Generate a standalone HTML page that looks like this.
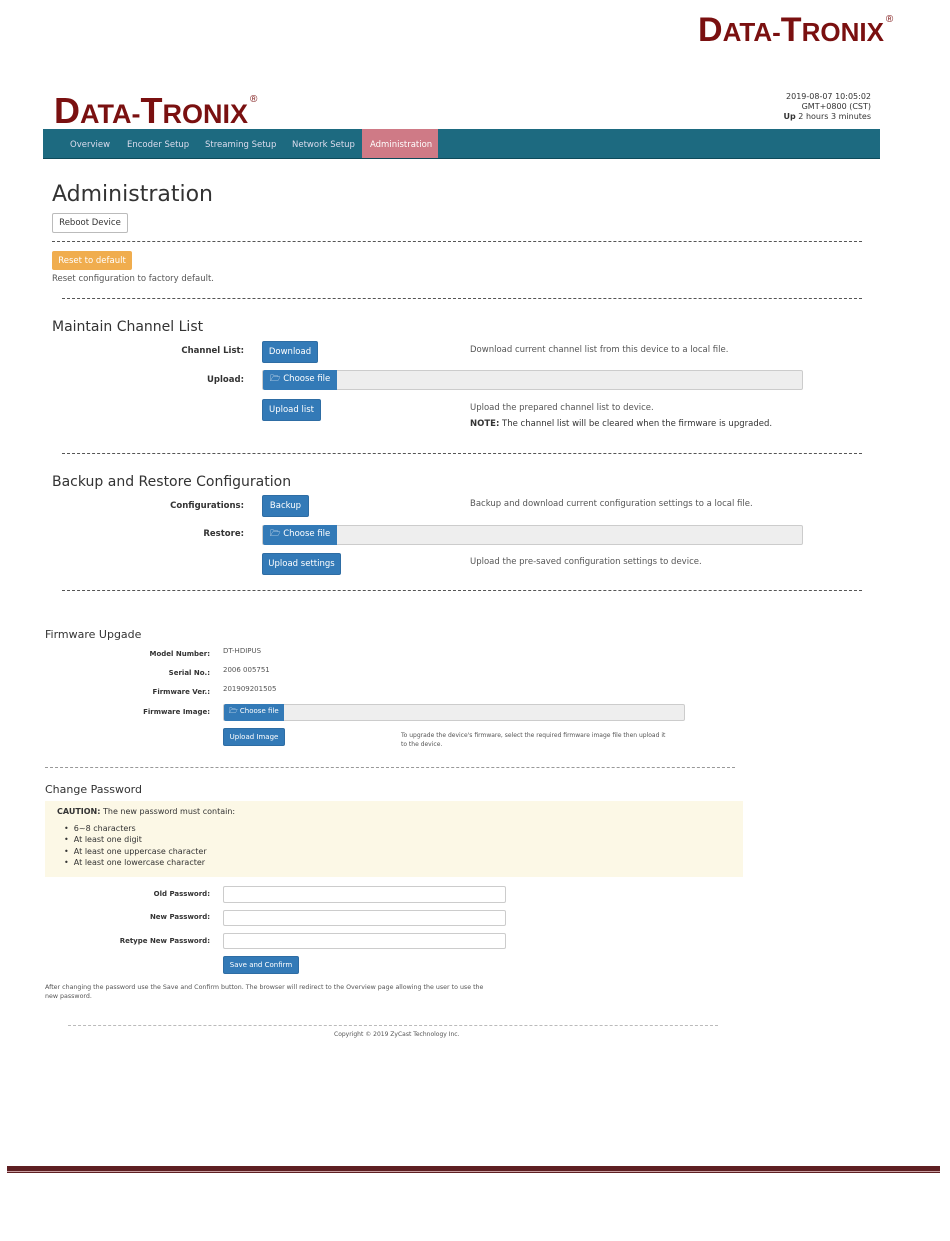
<!DOCTYPE html>
<html><head><meta charset="utf-8"><style>
body{margin:0;width:950px;height:1241px;position:relative;background:#fff;font-family:"DejaVu Sans","Liberation Sans",sans-serif;color:#333;overflow:hidden}
.a{position:absolute;white-space:nowrap}
.logo{font-family:"Liberation Sans",sans-serif;font-weight:bold;color:#7a1010;line-height:1}
.logo sup{font-size:10px;vertical-align:top;line-height:1;position:relative;top:2px;color:#7a1010;font-weight:normal;margin-left:2px}
.btn{position:absolute;background:#337ab7;color:#fff;border:1px solid #2e6da4;border-radius:2px;font-size:8.5px;display:flex;align-items:center;justify-content:center}
.file{position:absolute;background:#eee;border:1px solid #ccc;border-radius:2px}
.file span{position:absolute;left:0;top:-1px;bottom:-1px;background:#337ab7;color:#fff;font-size:8.5px;display:flex;align-items:center;padding:0 7px;border-radius:2px 0 0 2px}
.dash{position:absolute;border-top:1px dashed #555;height:0}
.lbl{position:absolute;font-weight:bold;font-size:8.5px;text-align:right;color:#333}
.t{position:absolute;font-size:8.5px;color:#555;white-space:nowrap}
.in{position:absolute;border:1px solid #ccc;border-radius:2px;background:#fff}
</style></head><body>
<div class="a logo" style="left:698px;top:13px;font-size:34px">D<span style="font-size:26px">ATA-</span>T<span style="font-size:26px">RONIX</span><sup>®</sup></div>
<div class="a logo" style="left:54px;top:93px;font-size:36px">D<span style="font-size:27px">ATA-</span>T<span style="font-size:27px">RONIX</span><sup>®</sup></div>
<div class="a" style="right:79px;top:92px;font-size:8px;text-align:right;line-height:10px;color:#333">2019-08-07 10:05:02<br>GMT+0800 (CST)<br><b>Up</b> 2 hours 3 minutes</div>
<div class="a" style="left:43px;top:129px;width:837px;height:29px;background:#1d6a80;border-bottom:1px solid #0e4a5a"></div>
<div class="a" style="left:362px;top:129px;width:76px;height:29px;background:#cf7a86"></div>
<div class="a" style="left:70px;top:140px;font-size:8.5px;color:#dde">Overview</div>
<div class="a" style="left:127px;top:140px;font-size:8.5px;color:#dde">Encoder Setup</div>
<div class="a" style="left:205px;top:140px;font-size:8.5px;color:#dde">Streaming Setup</div>
<div class="a" style="left:292px;top:140px;font-size:8.5px;color:#dde">Network Setup</div>
<div class="a" style="left:370px;top:140px;font-size:8.5px;color:#fff">Administration</div>

<div class="a" style="left:52px;top:182px;font-size:22px;color:#333">Administration</div>
<div class="a" style="left:52px;top:213px;width:74px;height:18px;border:1px solid #bbb;border-radius:2px;font-size:8.5px;display:flex;align-items:center;justify-content:center">Reboot Device</div>
<div class="dash" style="left:52px;top:241px;width:810px"></div>
<div class="a" style="left:52px;top:251px;width:80px;height:19px;background:#f0ad4e;border-radius:2px;color:#fff;font-size:8.5px;display:flex;align-items:center;justify-content:center">Reset to default</div>
<div class="t" style="left:52px;top:274px">Reset configuration to factory default.</div>
<div class="dash" style="left:62px;top:298px;width:800px"></div>

<div class="a" style="left:52px;top:319px;font-size:14px">Maintain Channel List</div>
<div class="lbl" style="right:706px;top:346px">Channel List:</div>
<div class="btn" style="left:262px;top:341px;width:54px;height:20px">Download</div>
<div class="t" style="left:470px;top:345px">Download current channel list from this device to a local file.</div>
<div class="lbl" style="right:706px;top:375px">Upload:</div>
<div class="file" style="left:262px;top:370px;width:539px;height:18px"><span>🗁 Choose file</span></div>
<div class="btn" style="left:262px;top:399px;width:57px;height:20px">Upload list</div>
<div class="t" style="left:470px;top:403px">Upload the prepared channel list to device.</div>
<div class="t" style="left:470px;top:419px;color:#333"><b>NOTE:</b> The channel list will be cleared when the firmware is upgraded.</div>
<div class="dash" style="left:62px;top:453px;width:800px"></div>

<div class="a" style="left:52px;top:474px;font-size:14px">Backup and Restore Configuration</div>
<div class="lbl" style="right:706px;top:501px">Configurations:</div>
<div class="btn" style="left:262px;top:495px;width:45px;height:20px">Backup</div>
<div class="t" style="left:470px;top:499px">Backup and download current configuration settings to a local file.</div>
<div class="lbl" style="right:706px;top:529px">Restore:</div>
<div class="file" style="left:262px;top:525px;width:539px;height:18px"><span>🗁 Choose file</span></div>
<div class="btn" style="left:262px;top:553px;width:77px;height:20px">Upload settings</div>
<div class="t" style="left:470px;top:557px">Upload the pre-saved configuration settings to device.</div>
<div class="dash" style="left:62px;top:590px;width:800px"></div>

<div class="a" style="left:45px;top:628px;font-size:11px">Firmware Upgade</div>
<div class="lbl" style="right:740px;top:650px;font-size:7px">Model Number:</div>
<div class="t" style="left:223px;top:647px;font-size:7px">DT-HDIPUS</div>
<div class="lbl" style="right:740px;top:669px;font-size:7px">Serial No.:</div>
<div class="t" style="left:223px;top:666px;font-size:7px">2006 005751</div>
<div class="lbl" style="right:740px;top:688px;font-size:7px">Firmware Ver.:</div>
<div class="t" style="left:223px;top:685px;font-size:7px">201909201505</div>
<div class="lbl" style="right:740px;top:708px;font-size:7px">Firmware Image:</div>
<div class="file" style="left:223px;top:704px;width:460px;height:15px"><span style="font-size:7px;padding:0 5px">🗁 Choose file</span></div>
<div class="btn" style="left:223px;top:728px;width:60px;height:16px;font-size:7px">Upload Image</div>
<div class="t" style="left:401px;top:731px;font-size:6px;line-height:9px">To upgrade the device's firmware, select the required firmware image file then upload it<br>to the device.</div>
<div class="dash" style="left:45px;top:767px;width:690px;border-color:#999"></div>

<div class="a" style="left:45px;top:783px;font-size:11px">Change Password</div>
<div class="a" style="left:45px;top:801px;width:698px;height:76px;background:#fcf8e6"></div>
<div class="a" style="left:57px;top:807px;font-size:8px;color:#333"><b>CAUTION:</b> The new password must contain:</div>
<div class="a" style="left:64px;top:823px;font-size:8px;line-height:11.3px;color:#333">•&nbsp; 6~8 characters<br>•&nbsp; At least one digit<br>•&nbsp; At least one uppercase character<br>•&nbsp; At least one lowercase character</div>
<div class="lbl" style="right:740px;top:890px;font-size:7px">Old Password:</div>
<div class="in" style="left:223px;top:886px;width:281px;height:15px"></div>
<div class="lbl" style="right:740px;top:913px;font-size:7px">New Password:</div>
<div class="in" style="left:223px;top:910px;width:281px;height:14px"></div>
<div class="lbl" style="right:740px;top:937px;font-size:7px">Retype New Password:</div>
<div class="in" style="left:223px;top:933px;width:281px;height:14px"></div>
<div class="btn" style="left:223px;top:956px;width:74px;height:16px;font-size:7px">Save and Confirm</div>
<div class="t" style="left:45px;top:983px;font-size:6.3px;line-height:9px">After changing the password use the Save and Confirm button. The browser will redirect to the Overview page allowing the user to use the<br>new password.</div>
<div class="dash" style="left:68px;top:1025px;width:650px;border-color:#bbb"></div>
<div class="t" style="left:334px;top:1031px;font-size:6px">Copyright © 2019 ZyCast Technology Inc.</div>

<div class="a" style="left:7px;top:1166px;width:933px;height:5px;background:#5e1f22"></div>
<div class="a" style="left:7px;top:1171px;width:933px;height:1px;background:#c9a0a3"></div>
<div class="a" style="left:7px;top:1172px;width:933px;height:1px;background:#5e1f22"></div>
</body></html>
